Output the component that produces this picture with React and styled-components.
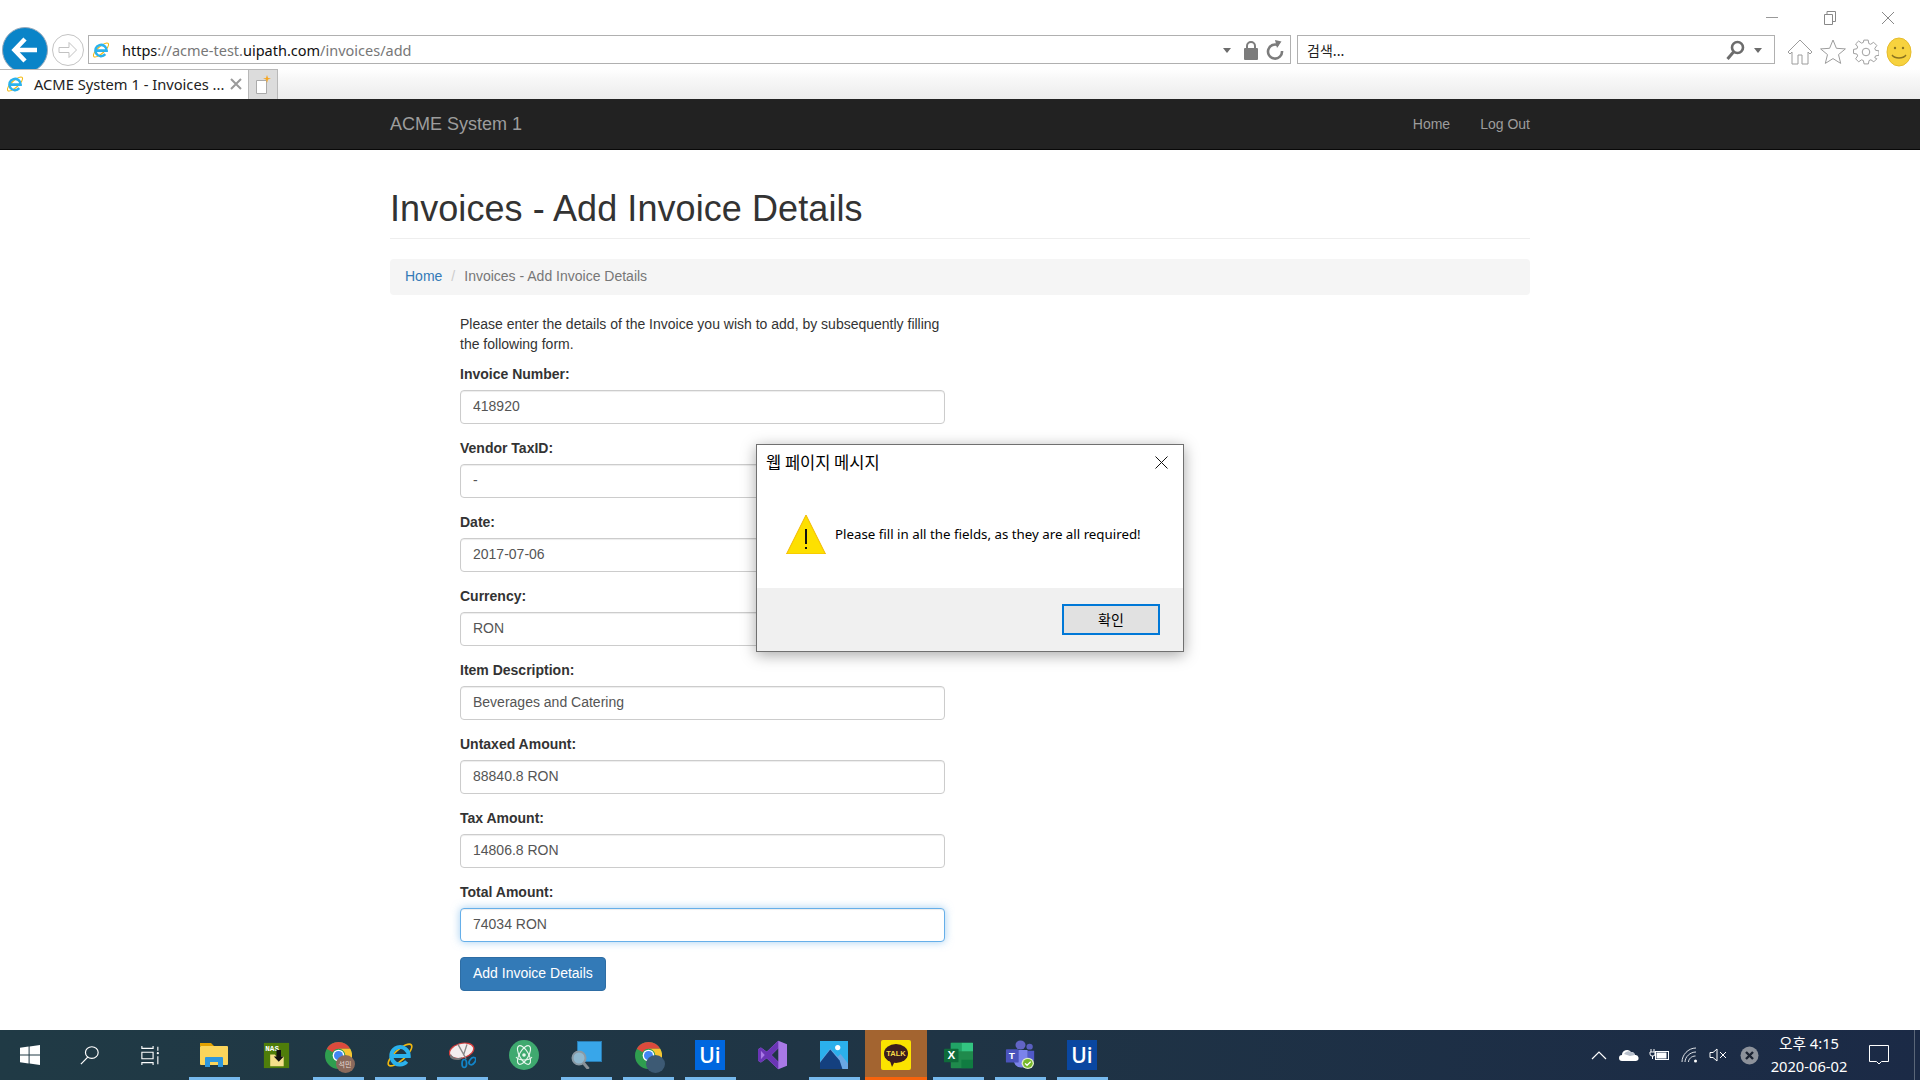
import React from "react";
import styled, { createGlobalStyle } from "styled-components";

const GlobalStyle = createGlobalStyle`
  html, body {
    margin: 0;
    padding: 0;
    background: #fff;
    overflow: hidden;
  }
  * {
    box-sizing: border-box;
  }
`;

const UI_FONT = `"Noto Sans", "Noto Sans CJK KR", sans-serif`;
const KR_FONT = `"Noto Sans CJK KR", "Noto Sans", sans-serif`;
const PAGE_FONT = `"Liberation Sans", Arial, sans-serif`;

/* ---------- drawings ---------- */

const IeIcon = ({ size = 18 }) => (
  <svg width={size} height={size} viewBox="0 0 24 24">
    <ellipse cx="12" cy="12" rx="13" ry="4.500" transform="rotate(-42 12 12)" fill="none" stroke="#f2b90f" strokeWidth="1.400" />
    <path d="M4.500 12.800h15a7.500 7.500 0 1 0-1.800 4.800" fill="none" stroke="#2bb2ec" strokeWidth="3.400" />
  </svg>
);

const ChromeIcon = ({ children }) => (
  <IconWrap>
    <svg width="27" height="27" viewBox="0 0 30 30">
      <circle cx="15" cy="15" r="15" fill="#2f9e4f" />
      <path d="M15 0a15 15 0 0 1 13 7.500H15a7.500 7.500 0 0 0-6.500 3.750L2 7.500A15 15 0 0 1 15 0z" fill="#dc4a3d" />
      <path d="M28 7.500A15 15 0 0 1 15 30l6.500-11.250A7.500 7.500 0 0 0 15 7.500z" fill="#f7c531" />
      <circle cx="15" cy="15" r="6.500" fill="#fff" />
      <circle cx="15" cy="15" r="5" fill="#4286f4" />
    </svg>
    {children}
  </IconWrap>
);

const WinIcon = () => (
  <svg width="20" height="20" viewBox="0 0 20 20" fill="#fff">
    <path d="M0 2.800 8.600 1.600v7.900H0zM9.600 1.500 20 0v9.500H9.600zM0 10.500h8.600v7.900L0 17.200zM9.600 10.500H20V20L9.600 18.500z" />
  </svg>
);

const SearchGlass = () => (
  <svg width="20" height="20" viewBox="0 0 22 24" preserveAspectRatio="none" fill="none" stroke="#fff" strokeWidth="1.300">
    <circle cx="13" cy="9" r="7" />
    <path d="M8.500 14.500 1 23" />
  </svg>
);

const TaskViewIcon = () => (
  <svg width="19" height="19" viewBox="0 0 22 24" preserveAspectRatio="none" fill="none" stroke="#fff" strokeWidth="1.300">
    <path d="M1 0v3h13V0M1 8h13v8H1zM1 24v-3h13v3M19.500 1v5M19.500 13v10" />
    <circle cx="19.500" cy="9" r="1.300" fill="#fff" stroke="none" />
  </svg>
);

const FolderIcon = () => (
  <svg width="28" height="24" viewBox="0 0 28 24">
    <path d="M0 0h11l3 3H0z" fill="#e2a100" />
    <rect x="0" y="3" width="28" height="19" rx="1" fill="#fcd55b" />
    <path d="M5 24v-9a1 1 0 0 1 1-1h16a1 1 0 0 1 1 1v9h-5v-5h-8v5z" fill="#2f97dd" />
  </svg>
);

const NasIcon = () => (
  <svg width="27" height="27" viewBox="0 0 30 30">
    <rect x="1" y="1" width="28" height="28" fill="#4f7d0a" />
    <text x="2.500" y="9.500" fontSize="8.500" fontWeight="700" fill="#fff" fontFamily="Liberation Mono, monospace">NAS</text>
    <path d="M8 14h5l2 2h8v11H8z" fill="#f4e08a" />
    <path d="M15 9h5v7h3l-5.500 6-5.500-6h3z" fill="#111" />
  </svg>
);

const SnipIcon = () => (
  <svg width="27" height="27" viewBox="0 0 30 34" preserveAspectRatio="none">
    <ellipse cx="14" cy="11" rx="14" ry="9" transform="rotate(-20 14 11)" fill="#f3eeee" stroke="#d33c3c" strokeWidth="1.500" />
    <path d="M2 15c3 6 9 6 13 4l-2 3C8 24 3 22 1 19z" fill="#777" />
    <path d="M10 3l9 18M20 3l-4 14" stroke="#888" strokeWidth="1.500" fill="none" />
    <ellipse cx="17" cy="27" rx="2.500" ry="5" fill="none" stroke="#1284c9" strokeWidth="2" />
    <ellipse cx="26" cy="24" rx="3" ry="5" transform="rotate(30 26 24)" fill="none" stroke="#1284c9" strokeWidth="2" />
  </svg>
);

const AtomIcon = () => (
  <svg width="30" height="30" viewBox="0 0 30 30">
    <circle cx="15" cy="15" r="15" fill="#3fa96f" />
    <g fill="none" stroke="#e8f6ee" strokeWidth="1.100">
      <ellipse cx="15" cy="15" rx="10.500" ry="4.500" transform="rotate(60 15 15)" />
      <ellipse cx="15" cy="15" rx="10.500" ry="4.500" transform="rotate(-60 15 15)" />
      <path d="M7 17c3 4 13 4 16 0" />
    </g>
    <circle cx="15" cy="15" r="1.800" fill="#e8f6ee" />
  </svg>
);

const MagnifierIcon = () => (
  <svg width="31" height="28" viewBox="0 0 31 28">
    <rect x="6.500" y="0.500" width="24" height="20" fill="#38a6ea" stroke="#2b7db3" />
    <circle cx="8" cy="17" r="6.500" fill="#8fb8cf" stroke="#8a9aa5" strokeWidth="2" />
    <path d="M12.500 22l5 6" stroke="#8a9298" strokeWidth="3" />
  </svg>
);

const VsIcon = () => (
  <svg width="29" height="30" viewBox="0 0 30 36" preserveAspectRatio="none">
    <path d="M21 1l9 4v26l-9 4-12-13-6 5-3-2V11l3-2 6 5zM21 10l-7 8 7 8z" fill="#a979e6" />
    <path d="M21 1 9 14l-6-5-3 2v14l3 2 6-5 12 13v-9l-7-8 7-8zM3 13l4 5-4 5z" fill="#6a35b5" />
  </svg>
);

const PhotosIcon = () => (
  <svg width="28" height="28" viewBox="0 0 30 30">
    <rect width="30" height="30" fill="#2bb0ec" />
    <circle cx="19" cy="7" r="2.800" fill="#fff" />
    <path d="M0 22 11 8l8 9 3-3 8 10v6H0z" fill="#6aa7e3" />
    <path d="M0 23 11 9l10 12 3 9H0z" fill="#14407f" />
  </svg>
);

const KakaoBadge = styled.div`
  width: 30px;
  height: 30px;
  background: #fbe300;
  border-radius: 2px;
  display: flex;
  align-items: center;
  justify-content: center;
  padding-bottom: 3px;
  position: relative;
`;

const KakaoBubble = styled.span`
  width: 24px;
  height: 19px;
  background: #3b1e1e;
  border-radius: 50%;
  color: #f8d848;
  font: 700 7.500px ${PAGE_FONT};
  display: flex;
  align-items: center;
  justify-content: center;
  position: relative;
  &::after {
    content: "";
    position: absolute;
    left: 6px;
    bottom: -4px;
    border-left: 2px solid transparent;
    border-right: 3px solid transparent;
    border-top: 6px solid #3b1e1e;
  }
`;

const ExcelIcon = () => (
  <IconWrap>
    <svg width="29" height="27" viewBox="0 0 30 32" preserveAspectRatio="none">
      <rect x="7" y="1" width="23" height="30" rx="1" fill="#1f8a4c" />
      <rect x="18" y="1" width="12" height="10" fill="#33c481" />
      <rect x="7" y="1" width="11" height="10" fill="#21a366" />
      <rect x="18" y="21" width="12" height="10" fill="#107c41" />
      <rect x="0" y="8" width="15" height="16" rx="1" fill="#0f6b3a" />
      <text x="3.500" y="20.500" fontSize="12" fontWeight="700" fill="#fff" fontFamily="Liberation Sans, sans-serif">X</text>
    </svg>
  </IconWrap>
);

const TeamsIcon = () => (
  <svg width="31" height="30" viewBox="0 0 34 36" preserveAspectRatio="none">
    <circle cx="17" cy="6" r="5.500" fill="#6264c5" />
    <circle cx="27" cy="8" r="3.500" fill="#5a5fc0" />
    <path d="M10 12h14a1 1 0 0 1 1 1v14a7 7 0 0 1-7 6 8 8 0 0 1-8-6z" fill="#7b83eb" />
    <path d="M25 13h7v10a5 5 0 0 1-7 4z" fill="#5059c9" />
    <rect x="1" y="11" width="14" height="16" rx="1" fill="#4b53bc" />
    <text x="4" y="23" fontSize="11" fontWeight="700" fill="#fff" fontFamily="Liberation Sans, sans-serif">T</text>
    <circle cx="25" cy="28" r="6.800" fill="#dfeec8" />
    <circle cx="25" cy="28" r="5.300" fill="#76b82a" />
    <path d="M22 28l2.200 2.300 4-4.300" fill="none" stroke="#fff" strokeWidth="1.500" />
  </svg>
);

const HomeOutline = () => (
  <svg width="26" height="26" viewBox="0 0 26 26" fill="#fff" stroke="#9c9c9c">
    <path d="M13 1 1 13l2 2 2-2v12h6v-9h4v9h6V13l2 2 2-2z" />
  </svg>
);

const StarOutline = () => (
  <svg width="26" height="26" viewBox="0 0 26 26" fill="#fff" stroke="#9c9c9c">
    <path d="m13 1 3.400 8.300 9 .6-6.900 5.700 2.200 8.800L13 19.600l-7.700 4.800 2.200-8.800L.6 9.900l9-.6z" />
  </svg>
);

const GearOutline = () => (
  <svg width="26" height="26" viewBox="0 0 24 24" fill="none" stroke="#9c9c9c" strokeWidth="0.900">
    <circle cx="12" cy="12" r="3.500" />
    <path d="M10 1h4l.6 3.200 1.700.7L19 3l3 3-1.900 2.700.7 1.700 3.200.6v4l-3.200.6-.7 1.700L22 18.300l-2.800 2.800-2.700-1.900-1.700.7L14.200 23h-4l-.6-3.100-1.700-.7-2.700 1.900L2.400 18.300l1.900-2.700-.7-1.700L.5 13.300v-3.700l3.100-.6.700-1.700L2.400 4.600l2.800-2.700 2.700 1.900 1.700-.7z" />
  </svg>
);

const Smile = () => (
  <svg width="26" height="30" viewBox="0 0 26 30">
    <ellipse cx="13" cy="15" rx="12" ry="14" fill="#f7d23e" stroke="#e6bc2c" />
    <circle cx="9" cy="11" r="1.200" fill="#8a7320" />
    <circle cx="17" cy="11" r="1.200" fill="#8a7320" />
    <path d="M6 18c3 4 11 4 14 0" fill="none" stroke="#8a7320" strokeWidth="1.300" />
  </svg>
);

const LockIcon = () => (
  <svg width="16" height="20" viewBox="0 0 16 20" fill="#7c7c7c">
    <path d="M3 8V6a5 5 0 0 1 10 0v2h-2V6a3 3 0 0 0-6 0v2z" />
    <rect x="1" y="8" width="14" height="12" rx="1" />
  </svg>
);

const RefreshIcon = () => (
  <svg width="18" height="20" viewBox="0 0 18 20" fill="none" stroke="#7c7c7c" strokeWidth="2.600">
    <path d="M12.500 5.500A7 7 0 1 0 16 11" />
    <path d="M9 0l6.500 1.500L11 8z" fill="#7c7c7c" stroke="none" />
  </svg>
);

const ZoomGlass = () => (
  <svg width="19" height="20" viewBox="0 0 19 20" fill="none" stroke="#6c6c6c" strokeWidth="2.600">
    <circle cx="11.500" cy="7.500" r="5.500" />
    <path d="M7.500 12 1.500 19" strokeWidth="3" />
  </svg>
);

const ChevronUp = () => (
  <svg width="16" height="10" viewBox="0 0 16 10" fill="none" stroke="#fff" strokeWidth="1.200">
    <path d="m1 9 7-7 7 7" />
  </svg>
);

const CloudIcon = () => (
  <svg width="20" height="14" viewBox="0 0 20 14">
    <path d="M3 13a3 3 0 0 1 0-6 5 5 0 0 1 9-3 4 4 0 0 1 4 3 3 3 0 0 1 1 6z" fill="#fff" />
    <path d="M5 6a5 5 0 0 1 7-2 4 4 0 0 1 4 3l-5 1z" fill="#b8c0cc" />
  </svg>
);

const BatteryIcon = () => (
  <svg width="20" height="14" viewBox="0 0 20 14" fill="none" stroke="#fff">
    <path d="M2 1v3M5 1v3M1 4h5v2a2 2 0 0 1-2 2H3a2 2 0 0 1-2-2zM3.500 8v3" />
    <rect x="6.500" y="3.500" width="13" height="8" />
    <rect x="7.500" y="4.500" width="10" height="6" fill="#fff" stroke="none" />
  </svg>
);

const WifiIcon = () => (
  <svg width="17" height="16" viewBox="0 0 17 16" fill="none" stroke="#dfe3e8" strokeWidth="1">
    <path d="M1 15C1 8 7 1 15 1M4 15c0-5 5-10 11-10M7.500 15c0-3 3-6 7-6" />
    <circle cx="14.500" cy="14" r="1.500" fill="#fff" stroke="none" />
  </svg>
);

const MuteIcon = () => (
  <svg width="20" height="14" viewBox="0 0 20 14" fill="none" stroke="#fff" strokeWidth="1">
    <path d="M1 4.500h3L8 1v12L4 9.500H1zM11 4l6 6M17 4l-6 6" />
  </svg>
);

const ErrorCircle = () => (
  <svg width="19" height="19" viewBox="0 0 19 19">
    <circle cx="9.500" cy="9.500" r="9" fill="#8d929b" />
    <path d="m6 6 7 7m0-7-7 7" stroke="#1b2332" strokeWidth="2.400" />
  </svg>
);

const NotifyIcon = () => (
  <svg width="20" height="20" viewBox="0 0 20 20" fill="none" stroke="#fff" strokeWidth="1">
    <path d="M.5.500h19v16h-7l-2.500 2.500L7.500 16.500h-7z" />
  </svg>
);

const WarnIcon = () => (
  <svg width="40" height="40" viewBox="0 0 40 40">
    <path d="M20 1 39.500 40H.5z" fill="#fde000" stroke="#f2b800" strokeLinejoin="round" />
    <rect x="19" y="15" width="2" height="15" fill="#111" />
    <rect x="19" y="33" width="2" height="2" fill="#111" />
  </svg>
);

/* ---------- browser chrome ---------- */

const Page = styled.div`
  width: 1920px;
  height: 1080px;
  display: flex;
  flex-direction: column;
  position: relative;
  overflow: hidden;
  background: #fff;
`;

const WindowBar = styled.div`
  height: 27px;
  display: flex;
  justify-content: flex-end;
  align-items: center;
  padding: 9px 3px 0 0;
`;

const WinControl = styled.div`
  width: 58px;
  height: 16px;
  display: flex;
  align-items: center;
  justify-content: center;
`;

const AddressRow = styled.div`
  height: 42px;
  display: flex;
  align-items: flex-start;
  padding: 8px 0 0 2px;
`;

const BackButton = styled.div`
  width: 46px;
  height: 46px;
  margin-top: -8px;
  border-radius: 50%;
  background: #0a84c8;
  border: 1px solid #9ab;
  display: flex;
  align-items: center;
  justify-content: center;
  flex: none;
`;

const ForwardButton = styled.div`
  width: 32px;
  height: 32px;
  margin: -1px 4px 0 4px;
  border-radius: 50%;
  background: #fff;
  border: 1px solid #c4c4c4;
  display: flex;
  align-items: center;
  justify-content: center;
  flex: none;
`;

const FieldBox = styled.div`
  height: 29px;
  width: ${(p) => p.$width}px;
  margin-right: ${(p) => p.$gap || 0}px;
  flex: none;
  border: 1px solid #b0b0b0;
  background: #fff;
  display: flex;
  align-items: center;
  padding: ${(p) => p.$pad};
  font: 14.500px ${UI_FONT};
  color: #777;
`;

const UrlText = styled.span`
  margin-left: 12px;
  flex: 1;
  white-space: nowrap;
`;

const UrlDark = styled.span`
  color: #111;
`;

const DropArrow = styled.span`
  width: 0;
  height: 0;
  flex: none;
  border-left: 4px solid transparent;
  border-right: 4px solid transparent;
  border-top: 5px solid #6c6c6c;
  margin: 2px ${(p) => p.$right || 0}px 0 ${(p) => p.$left || 0}px;
`;

const RefreshSlot = styled.span`
  display: flex;
  margin-left: 7px;
`;

const SearchText = styled.span`
  flex: 1;
  color: #222;
  font: 14px ${KR_FONT};
`;

const ToolIcons = styled.div`
  display: flex;
  align-items: center;
  gap: 7px;
  margin: 2px 0 0 5px;
`;

const TabRow = styled.div`
  height: 30px;
  display: flex;
  position: relative;
  background: linear-gradient(#ffffff, #f8f8f8 30%, #ececec);
`;

const Tab = styled.div`
  width: 249px;
  height: 30px;
  border: 1px solid #b8b8b8;
  border-width: 1px 1px 0 0;
  background: #fff;
  display: flex;
  align-items: center;
  padding: 0 6px 2px;
  font: 14.700px ${UI_FONT};
  color: #222;
`;

const TabTitle = styled.span`
  margin-left: 10px;
  flex: 1;
  white-space: nowrap;
`;

const NewTab = styled.div`
  width: 29px;
  height: 30px;
  background: #dcdcdc;
  border: 1px solid #b8b8b8;
  border-width: 1px 1px 0 0;
  display: flex;
  align-items: center;
  justify-content: center;
`;

/* ---------- acme page ---------- */

const NavBar = styled.nav`
  height: 51px;
  flex: none;
  background: #222;
  border-bottom: 1px solid #080808;
  font-family: ${PAGE_FONT};
  color: #9d9d9d;
`;

const Container = styled.div`
  width: 1140px;
  margin: 0 auto;
`;

const NavInner = styled(Container)`
  height: 50px;
  display: flex;
  align-items: center;
  justify-content: space-between;
`;

const Brand = styled.a`
  font-size: 18px;
`;

const NavLinks = styled.div`
  display: flex;
  gap: 30px;
  font-size: 14px;
`;

const Main = styled.main`
  flex: 1;
  min-height: 0;
  padding-top: 39px;
  font: 14px/20px ${PAGE_FONT};
  color: #333;
`;

const PageHeader = styled.div`
  border-bottom: 1px solid #eee;
  padding-bottom: 9px;
  margin-bottom: 20px;
`;

const Title = styled.h1`
  margin: 0;
  font-size: 36px;
  font-weight: 500;
  line-height: 39.6px;
  letter-spacing: 0.08px;
`;

const Breadcrumb = styled.ol`
  list-style: none;
  margin: 0 0 19px;
  padding: 7px 15px 9px;
  background: #f5f5f5;
  border-radius: 4px;
  display: flex;
  color: #777;
`;

const Crumb = styled.li`
  color: ${(p) => (p.$link ? "#337ab7" : "#777")};
  &:not(:last-child)::after {
    content: "/";
    color: #ccc;
    padding: 0 9px;
  }
`;

const FormColumn = styled.form`
  width: 485px;
  margin-left: 70px;
`;

const Intro = styled.p`
  margin: 0 0 10px;
`;

const Group = styled.div`
  margin-bottom: 14px;
`;

const Label = styled.label`
  display: block;
  font-weight: 700;
  margin-bottom: 6px;
`;

const Input = styled.input`
  display: block;
  width: 100%;
  height: 34px;
  padding: 5px 12px 7px;
  font: 14px/20px ${PAGE_FONT};
  color: #555;
  background: #fff;
  border: 1px solid ${(p) => (p.$focus ? "#66afe9" : "#ccc")};
  border-radius: 4px;
  outline: none;
  box-shadow: ${(p) =>
    p.$focus
      ? "inset 0 1px 1px rgba(0,0,0,.075), 0 0 8px rgba(102,175,233,.6)"
      : "inset 0 1px 1px rgba(0,0,0,.075)"};
`;

const SubmitButton = styled.button`
  height: 34px;
  margin-top: 1px;
  padding: 5px 12px 7px;
  font: 14px/20px ${PAGE_FONT};
  color: #fff;
  background: #337ab7;
  border: 1px solid #2e6da4;
  border-radius: 4px;
`;

/* ---------- alert dialog ---------- */

const Dialog = styled.div`
  position: absolute;
  left: 756px;
  top: 444px;
  width: 428px;
  height: 208px;
  background: #fff;
  border: 1px solid #707070;
  box-shadow: 0 3px 14px rgba(0, 0, 0, 0.35);
  display: flex;
  flex-direction: column;
  color: #000;
`;

const DialogTitleBar = styled.div`
  height: 34px;
  display: flex;
  align-items: center;
  justify-content: space-between;
  padding: 0 15px 0 9px;
  font: 16.500px ${KR_FONT};
`;

const DialogBody = styled.div`
  flex: 1;
  display: flex;
  align-items: center;
  gap: 9px;
  padding: 0 0 0 29px;
  font: 13.300px "Noto Sans", ${KR_FONT};
`;

const DialogFooter = styled.div`
  height: 63px;
  background: #f0f0f0;
  display: flex;
  justify-content: flex-end;
  padding: 16px 23px 0 0;
`;

const DialogButton = styled.button`
  width: 98px;
  height: 31px;
  background: #e1e1e1;
  border: 2px solid #0078d7;
  font: 14px ${KR_FONT};
  color: #000;
  padding: 0 0 2px;
`;

/* ---------- taskbar ---------- */

const TaskBar = styled.footer`
  height: 50px;
  flex: none;
  display: flex;
  align-items: center;
  background: linear-gradient(90deg, #203a45, #1f3445 50%, #1b2a46);
`;

const SystemButton = styled.div`
  width: 60px;
  height: 50px;
  display: flex;
  align-items: center;
  justify-content: center;
`;

const AppList = styled.div`
  display: flex;
  margin-left: 3px;
`;

const AppSlot = styled.div`
  width: 62px;
  height: 50px;
  flex: none;
  display: flex;
  align-items: center;
  justify-content: center;
  position: relative;
  background: ${(p) => (p.$alert ? "#a36430" : "transparent")};
  &::after {
    content: "";
    display: ${(p) => (p.$alert || p.$running ? "block" : "none")};
    position: absolute;
    left: ${(p) => (p.$alert ? 0 : 5.5)}px;
    right: ${(p) => (p.$alert ? 0 : 5.5)}px;
    bottom: 0;
    height: 3px;
    background: ${(p) => (p.$alert ? "#f7630c" : "#76b9ed")};
  }
`;

const IconWrap = styled.div`
  position: relative;
  display: flex;
`;

const Avatar = styled.span`
  position: absolute;
  right: -3px;
  bottom: -4px;
  width: 19px;
  height: 18px;
  border-radius: 50%;
  background: ${(p) => p.$bg};
  color: #e8ddd5;
  font: 7px/18px ${KR_FONT};
  text-align: center;
`;

const UiTile = styled.div`
  width: 30px;
  height: 30px;
  background: ${(p) => p.$bg};
  color: #fff;
  font: 600 21px/30px "Open Sans", sans-serif;
  text-align: center;
`;

const Tray = styled.div`
  margin-left: auto;
  height: 50px;
  display: flex;
  align-items: center;
`;

const TrayItem = styled.div`
  width: 30px;
  display: flex;
  justify-content: center;
`;

const Clock = styled.div`
  width: 90px;
  text-align: center;
  color: #fff;
  font: 14.700px/23px ${UI_FONT};
  white-space: nowrap;
`;

const NotifySlot = styled.div`
  width: 61px;
  height: 50px;
  display: flex;
  align-items: center;
  justify-content: center;
  border-right: 1px solid #5a6678;
  margin-right: 5px;
  padding-right: 10px;
`;

const fields = [
  ["Invoice Number:", "418920"],
  ["Vendor TaxID:", "-"],
  ["Date:", "2017-07-06"],
  ["Currency:", "RON"],
  ["Item Description:", "Beverages and Catering"],
  ["Untaxed Amount:", "88840.8 RON"],
  ["Tax Amount:", "14806.8 RON"],
  ["Total Amount:", "74034 RON"],
];

const apps = [
  { icon: <FolderIcon />, running: true },
  { icon: <NasIcon /> },
  { icon: <ChromeIcon><Avatar $bg="#8a6a5c">석민</Avatar></ChromeIcon>, running: true },
  { icon: <IeIcon size={28} />, running: true },
  { icon: <SnipIcon />, running: true },
  { icon: <AtomIcon /> },
  { icon: <MagnifierIcon />, running: true },
  { icon: <ChromeIcon><Avatar $bg="#3d5a74" /></ChromeIcon>, running: true },
  { icon: <UiTile $bg="#0067df">Ui</UiTile>, running: true },
  { icon: <VsIcon /> },
  { icon: <PhotosIcon />, running: true },
  { icon: <KakaoBadge><KakaoBubble>TALK</KakaoBubble></KakaoBadge>, alert: true },
  { icon: <ExcelIcon />, running: true },
  { icon: <TeamsIcon />, running: true },
  { icon: <UiTile $bg="#0a47a1">Ui</UiTile>, running: true },
];

export default function App() {
  return (
    <Page>
      <GlobalStyle />
      <header>
        <WindowBar>
          <WinControl>
            <svg width="12" height="2"><path d="M0 .5h12" stroke="#999" /></svg>
          </WinControl>
          <WinControl>
            <svg width="12" height="14" fill="none" stroke="#888"><path d="M.5 3.500h8v10h-8zM3 3.500v-3h8.500v10h-3" /></svg>
          </WinControl>
          <WinControl>
            <svg width="14" height="14" stroke="#888"><path d="m1 1 12 12m0-12L1 13" /></svg>
          </WinControl>
        </WindowBar>
        <AddressRow>
          <BackButton>
            <svg width="28" height="26" viewBox="0 0 28 26" fill="none" stroke="#fff" strokeWidth="4.500">
              <path d="M26 13H4M14 2 3.500 13 14 24" />
            </svg>
          </BackButton>
          <ForwardButton>
            <svg width="20" height="18" viewBox="0 0 20 18" fill="none" stroke="#c2c2c2">
              <path d="M1 6.500h10V1.500L18.500 9 11 16.500v-5H1z" />
            </svg>
          </ForwardButton>
          <FieldBox $width={1203} $gap={6} $pad="0 6px 0 3px">
            <IeIcon />
            <UrlText>
              <UrlDark>https</UrlDark>://acme-test.<UrlDark>uipath.com</UrlDark>/invoices/add
            </UrlText>
            <DropArrow $right={12} />
            <LockIcon />
            <RefreshSlot>
              <RefreshIcon />
            </RefreshSlot>
          </FieldBox>
          <FieldBox $width={478} $gap={7} $pad="0 12px 0 9px">
            <SearchText>검색...</SearchText>
            <ZoomGlass />
            <DropArrow $left={9} />
          </FieldBox>
          <ToolIcons>
            <HomeOutline />
            <StarOutline />
            <GearOutline />
            <Smile />
          </ToolIcons>
        </AddressRow>
        <TabRow>
          <Tab>
            <IeIcon />
            <TabTitle>ACME System 1 - Invoices ...</TabTitle>
            <svg width="12" height="12" stroke="#9a9a9a" strokeWidth="2"><path d="m1 1 10 10m0-10L1 11" /></svg>
          </Tab>
          <NewTab>
            <svg width="18" height="20" viewBox="0 0 18 20">
              <path d="M2.500 5.500h10v13h-10z" fill="#fff" stroke="#aaa" />
              <path d="M13 0l1 3 3 .500-3 1L13 8l-1-3.500-3-1 3-.500z" fill="#f5a623" />
            </svg>
          </NewTab>
        </TabRow>
      </header>

      <NavBar>
        <NavInner>
          <Brand>ACME System 1</Brand>
          <NavLinks>
            <span>Home</span>
            <span>Log Out</span>
          </NavLinks>
        </NavInner>
      </NavBar>

      <Main>
        <Container>
          <PageHeader>
            <Title>Invoices - Add Invoice Details</Title>
          </PageHeader>
          <Breadcrumb>
            <Crumb $link>Home</Crumb>
            <Crumb>Invoices - Add Invoice Details</Crumb>
          </Breadcrumb>
          <FormColumn onSubmit={(e) => e.preventDefault()}>
            <Intro>
              Please enter the details of the Invoice you wish to add, by subsequently filling the following form.
            </Intro>
            {fields.map(([label, value], i) => (
              <Group key={label}>
                <Label>{label}</Label>
                <Input readOnly value={value} $focus={i === fields.length - 1} />
              </Group>
            ))}
            <SubmitButton type="submit">Add Invoice Details</SubmitButton>
          </FormColumn>
        </Container>
      </Main>

      <TaskBar>
        <SystemButton><WinIcon /></SystemButton>
        <SystemButton><SearchGlass /></SystemButton>
        <SystemButton><TaskViewIcon /></SystemButton>
        <AppList>
          {apps.map((app, i) => (
            <AppSlot key={i} $running={app.running} $alert={app.alert}>
              {app.icon}
            </AppSlot>
          ))}
        </AppList>
        <Tray>
          <TrayItem><ChevronUp /></TrayItem>
          <TrayItem><CloudIcon /></TrayItem>
          <TrayItem><BatteryIcon /></TrayItem>
          <TrayItem><WifiIcon /></TrayItem>
          <TrayItem><MuteIcon /></TrayItem>
          <TrayItem><ErrorCircle /></TrayItem>
          <Clock>
            <div>오후 4:15</div>
            <div>2020-06-02</div>
          </Clock>
          <NotifySlot><NotifyIcon /></NotifySlot>
        </Tray>
      </TaskBar>

      <Dialog role="alertdialog">
        <DialogTitleBar>
          <span>웹 페이지 메시지</span>
          <svg width="13" height="13" stroke="#111"><path d="m.5.500 12 12m0-12-12 12" /></svg>
        </DialogTitleBar>
        <DialogBody>
          <WarnIcon />
          <span>Please fill in all the fields, as they are all required!</span>
        </DialogBody>
        <DialogFooter>
          <DialogButton>확인</DialogButton>
        </DialogFooter>
      </Dialog>
    </Page>
  );
}
